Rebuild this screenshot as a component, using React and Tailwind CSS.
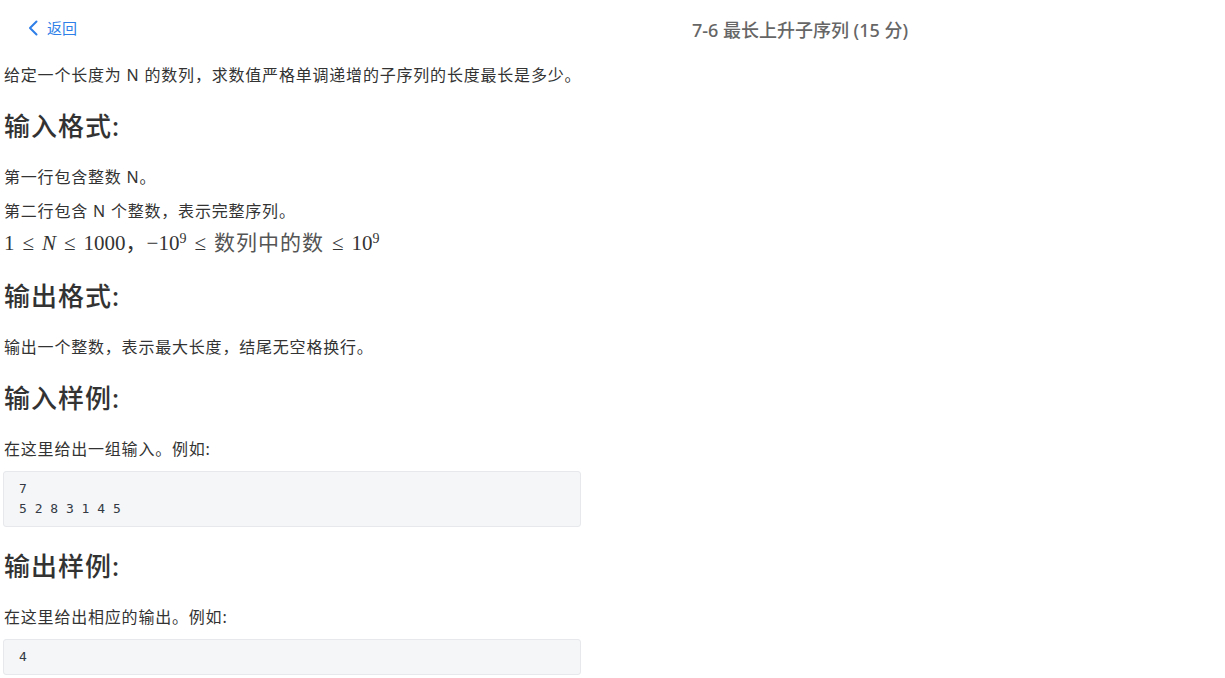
import React from 'react';

const sans = "font-['Noto_Sans','Noto_Sans_CJK_SC',sans-serif]";

const Heading = ({ children }) => (
  <h2 className="text-[26px] leading-[36px] font-medium tracking-[1px] text-[#333333] mt-[21px] mb-[21px]">{children}</h2>
);

const Para = ({ children }) => (
  <p className="text-[16px] leading-[24px] tracking-[0.8px] text-[#333333] mb-[10px]">{children}</p>
);

const CodeBlock = ({ lines }) => (
  <pre className="w-[578px] -ml-[1px] bg-[#f5f6f8] border border-[#e6e8eb] rounded-[3px] px-[15px] py-[7px] text-[13px] leading-[20px] text-[#333a44] font-['DejaVu_Sans_Mono',monospace]">
    {lines.join('\n')}
  </pre>
);

export default function App() {
  return (
    <div className={`${sans} bg-white min-h-[678px] w-[1225px]`}>
      {/* header */}
      <div className="flex items-center h-[60px]">
        <div className="w-[375px] pl-[27px]">
          <a className="inline-flex items-center gap-[8px] text-[15px] text-[#2f7fe8] cursor-pointer">
            <svg width="12" height="18" viewBox="0 0 12 18" fill="none">
              <path d="M9.5 2.5 L3 9 L9.5 15.5" stroke="#2f7fe8" strokeWidth="2" strokeLinecap="round" strokeLinejoin="round" />
            </svg>
            返回
          </a>
        </div>
        <div className="flex-1 text-center text-[18px] font-medium text-[#666666]">7-6 最长上升子序列 (15 分)</div>
      </div>

      <div className="pl-[4px]">
        <p className="text-[16px] leading-[24px] tracking-[0.8px] text-[#333333] mt-[3px]">给定一个长度为 N 的数列，求数值严格单调递增的子序列的长度最长是多少。</p>

        <Heading>输入格式:</Heading>
        <Para>第一行包含整数 N。</Para>
        <p className="text-[16px] leading-[24px] tracking-[0.8px] text-[#333333]">第二行包含 N 个整数，表示完整序列。</p>
        <p className="text-[21px] leading-[28px] text-[#333333] mt-[6px] font-['Liberation_Serif','Noto_Sans_CJK_SC',serif] whitespace-nowrap">
          1<span className="px-[8px]">≤</span><i>N</i><span className="px-[8px]">≤</span>1000，−10<sup className="text-[14px]">9</sup><span className="px-[8px]">≤</span><span className="text-[#555] tracking-[1px]">数列中的数</span><span className="px-[8px]">≤</span>10<sup className="text-[14px]">9</sup>
        </p>

        <Heading>输出格式:</Heading>
        <Para>输出一个整数，表示最大长度，结尾无空格换行。</Para>

        <Heading>输入样例:</Heading>
        <Para>在这里给出一组输入。例如:</Para>
        <CodeBlock lines={['7', '5 2 8 3 1 4 5']} />

        <Heading>输出样例:</Heading>
        <Para>在这里给出相应的输出。例如:</Para>
        <CodeBlock lines={['4']} />
      </div>
    </div>
  );
}
